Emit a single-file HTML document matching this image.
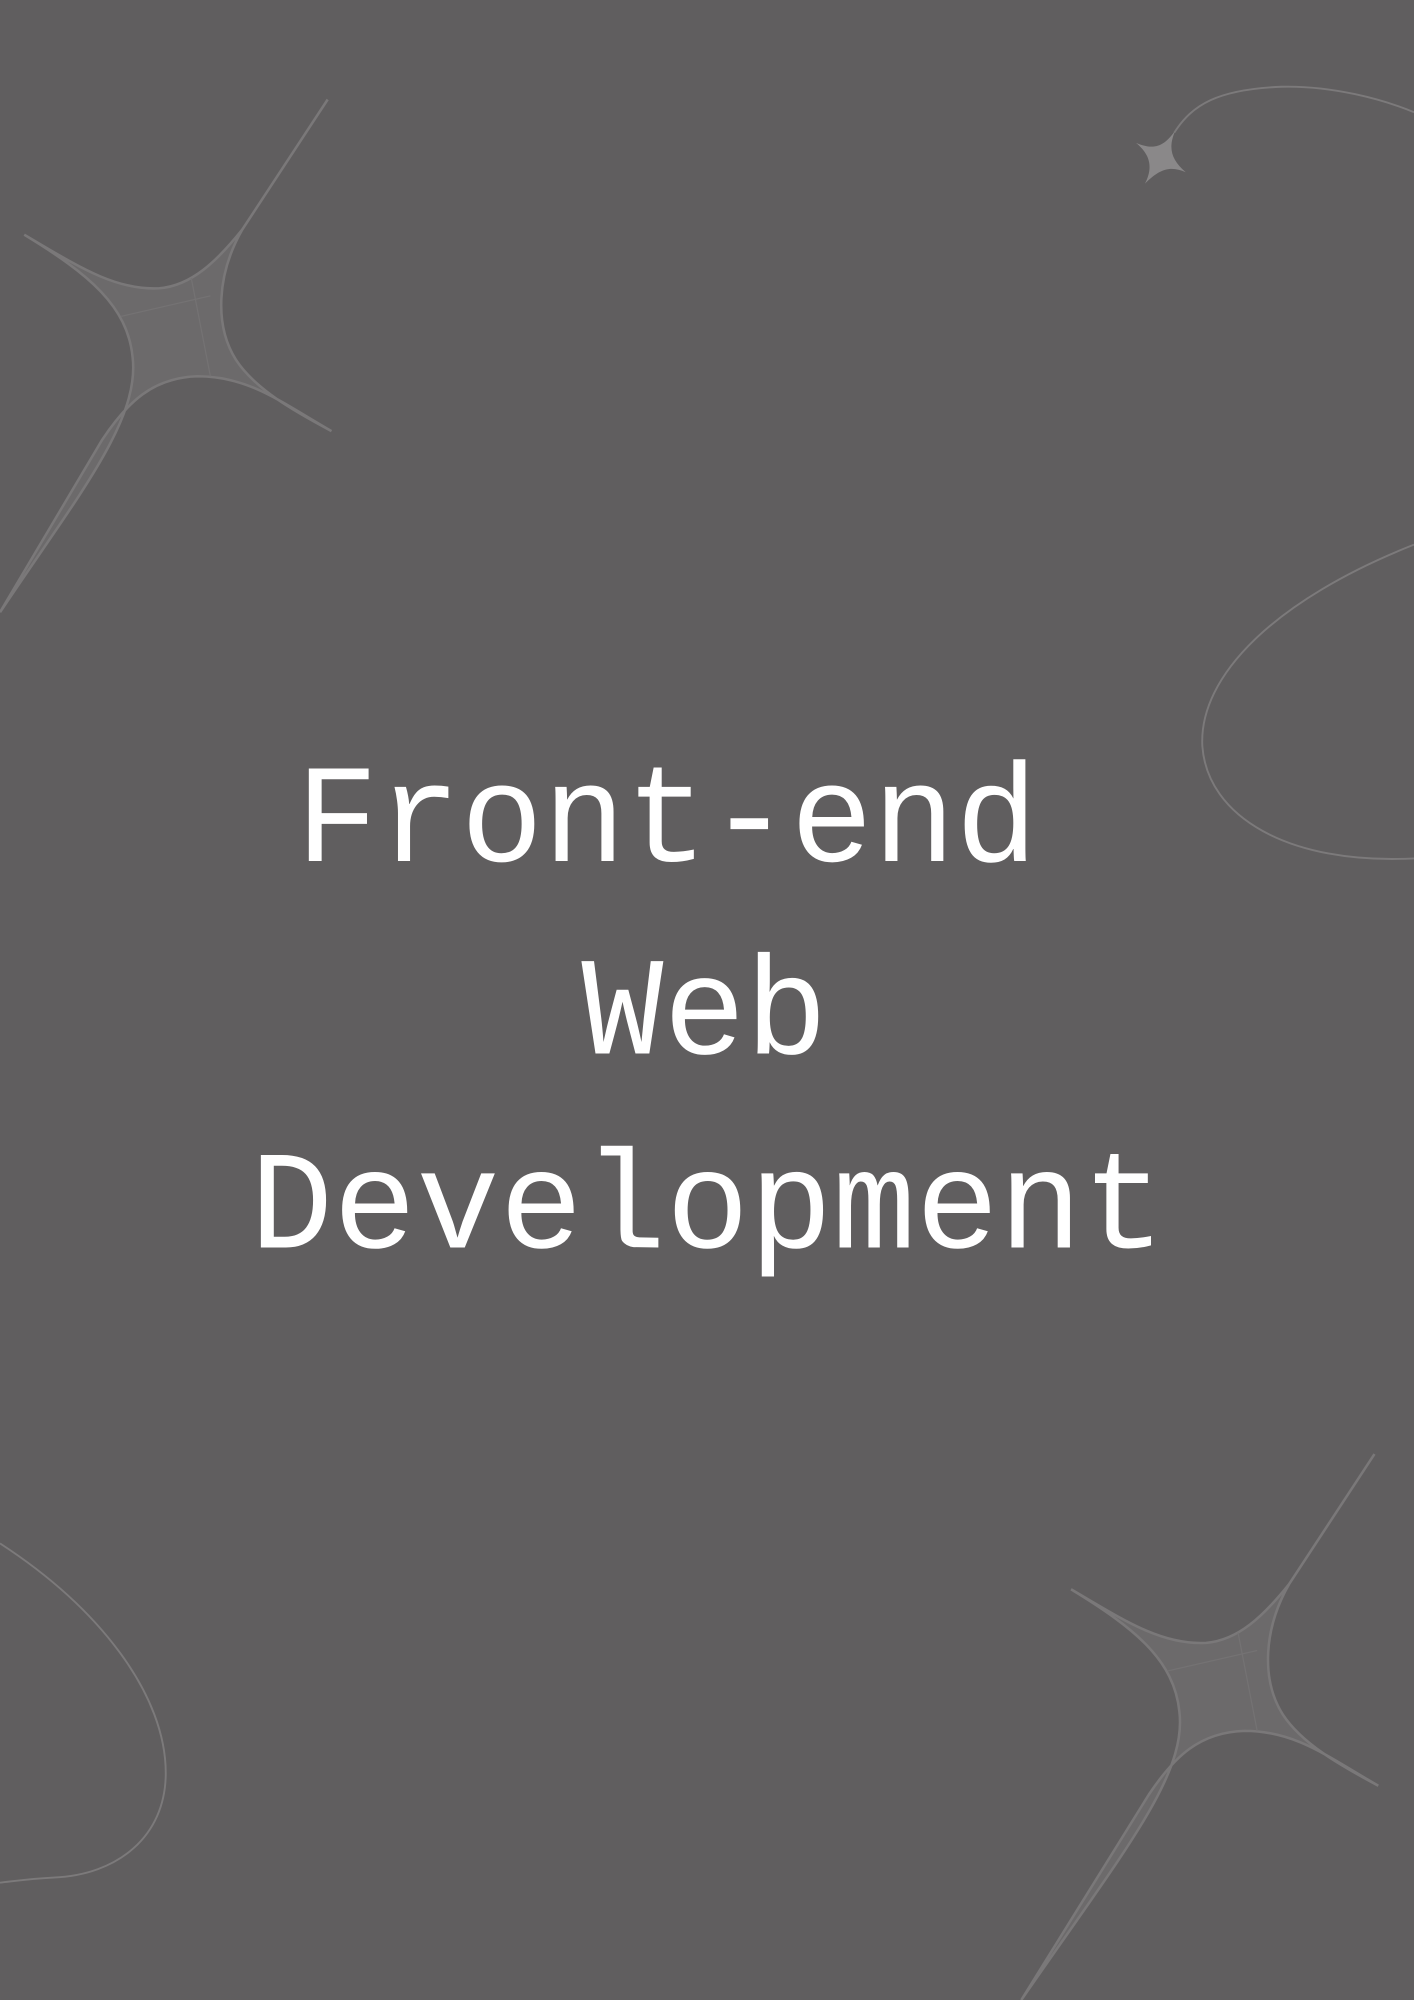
<!DOCTYPE html>
<html><head><meta charset="utf-8"><style>
html,body{margin:0;padding:0;background:#605e5f;}
svg{display:block;}
</style></head><body>
<svg width="1414" height="2000" viewBox="0 0 1109 1568" preserveAspectRatio="none" xmlns="http://www.w3.org/2000/svg">
<rect width="1109" height="1568" fill="#605e5f"/>
<g id="star" fill="#6c6a6b" stroke="#7a7879" stroke-width="2">
<path d="M257,78 L190,180 C170,215 168,255 185,282 C200,305 230,322 260,338 C220,315 195,295 155,295 C120,296 100,315 80,345 L0,480 C60,390 110,330 104,280 C100,240 70,215 19,184 C60,208 90,228 125,226 C150,224 170,205 190,180 Z"/>
<path d="M95,248 L165,232 M150,218 L165,295" fill="none" stroke="#747273" stroke-width="1"/>
</g>
<g transform="translate(821,1062)" fill="#6c6a6b" stroke="#7a7879" stroke-width="2">
<path d="M257,78 L190,180 C170,215 168,255 185,282 C200,305 230,322 260,338 C220,315 195,295 155,295 C120,296 100,315 80,345 L-20,506 C60,390 110,330 104,280 C100,240 70,215 19,184 C60,208 90,228 125,226 C150,224 170,205 190,180 Z"/>
<path d="M95,248 L165,232 M150,218 L165,295" fill="none" stroke="#747273" stroke-width="1"/>
</g>
<path d="M891,112 C905,118 913,115 922,102 C916,115 918,125 930,135 C918,130 910,132 898,144 C904,132 903,122 891,112 Z" fill="#8a8889"/>
<g fill="none" stroke="#7c7a7b" stroke-width="1.5">
<path d="M921,104 C935,82 955,70 1005,68 C1045,67 1085,78 1109,88"/>
<path d="M1109,427 C1000,470 940,530 943,585 C947,640 1010,678 1109,673"/>
<path d="M0,1210 C80,1262 130,1330 130,1390 C130,1440 92,1470 42,1472 C22,1473 10,1475 0,1476"/>
</g>
<g fill="#ffffff" font-family="'Liberation Mono', 'DejaVu Sans Mono', monospace" font-size="110">
<text x="232" y="675" textLength="582" lengthAdjust="spacingAndGlyphs">Front-end</text>
<text x="456" y="826" textLength="193" lengthAdjust="spacingAndGlyphs">Web</text>
<text x="196" y="978" textLength="718" lengthAdjust="spacingAndGlyphs">Development</text>
</g>
</svg>
</body></html>
